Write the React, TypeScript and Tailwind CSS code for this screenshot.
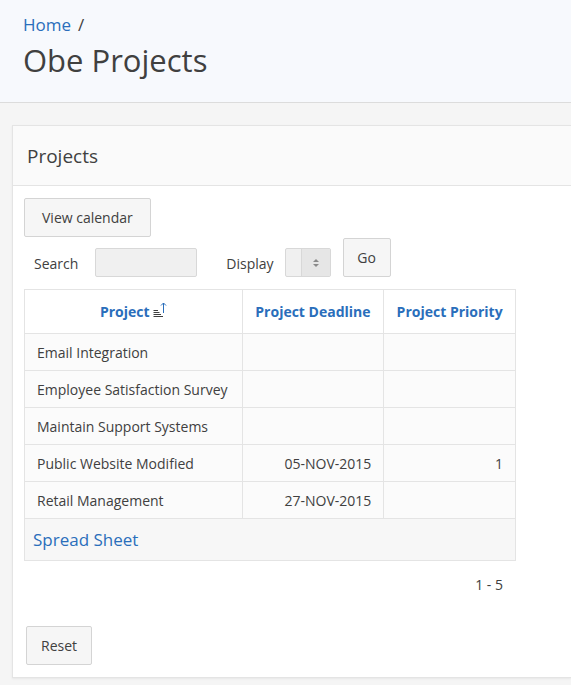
import React from 'react';

const rows = [
  { name: 'Email Integration', deadline: '', priority: '' },
  { name: 'Employee Satisfaction Survey', deadline: '', priority: '' },
  { name: 'Maintain Support Systems', deadline: '', priority: '' },
  { name: 'Public Website Modified', deadline: '05-NOV-2015', priority: '1' },
  { name: 'Retail Management', deadline: '27-NOV-2015', priority: '' },
];

function SortIcon() {
  return (
    <svg width="14" height="18" viewBox="0 0 14 18" className="inline-block ml-[3px] -mt-[6px]">
      <g stroke="#404040" strokeWidth="1">
        <line x1="0.5" y1="9.5" x2="5" y2="9.5" />
        <line x1="0.5" y1="11.5" x2="6.5" y2="11.5" />
        <line x1="0.5" y1="13.5" x2="8" y2="13.5" />
        <line x1="0.5" y1="15.5" x2="10" y2="15.5" />
      </g>
      <g stroke="#2a6ebb" strokeWidth="1" fill="none">
        <line x1="10.5" y1="2" x2="10.5" y2="12" />
        <polyline points="8,4.5 10.5,2 13,4.5" />
      </g>
    </svg>
  );
}

export default function App() {
  return (
    <div className="min-h-[685px] bg-[#f5f5f5] font-['Open_Sans','Liberation_Sans',sans-serif] text-[#404040]">
      <div className="h-[103px] bg-[#f7f9fd] border-b border-[#dcdcdc] px-[23px] pt-[12px]">
        <div className="text-[17px] leading-[26px]">
          <span className="text-[#2a6ebb]">Home</span>
          <span className="ml-[7px] text-[#404040]">/</span>
        </div>
        <h1 className="text-[31px] leading-[44px] text-[#404040]">Obe Projects</h1>
      </div>

      <div className="pt-[22px] pl-[12px]">
        <div className="bg-white border border-r-0 border-[#e4e4e4] shadow-[0_1px_2px_rgba(0,0,0,0.06)]">
          <div className="h-[60px] bg-[#fafafa] border-b border-[#e4e4e4] px-[14px] pt-[2px] flex items-center text-[19px] text-[#404040]">
            Projects
          </div>
          <div className="px-[11px] pt-[12px] pb-[12px]">
            <button className="h-[39px] px-[17px] bg-[#f6f6f6] border border-[#d4d4d4] rounded-[2px] text-[14px] text-[#404040]">
              View calendar
            </button>
            <div className="flex items-end mt-[1px] h-[39px]">
              <span className="ml-[10px] text-[14px] leading-[29px] translate-y-[1px]">Search</span>
              <div className="ml-[17px] w-[102px] h-[29px] bg-[#f0f0f0] border border-[#d8d8d8] rounded-[2px]" />
              <span className="ml-[29px] text-[14px] leading-[29px] translate-y-[1px]">Display</span>
              <div className="ml-[11px] w-[46px] h-[29px] bg-[#f0f0f0] border border-[#d8d8d8] rounded-[2px] flex">
                <div className="w-[16px] border-r border-[#d8d8d8]" />
                <div className="flex-1 bg-[#e6e6e6] flex items-center justify-center">
                  <svg width="6" height="10" viewBox="0 0 6 10">
                    <polygon points="0,4 3,1 6,4" fill="#8a8a8a" />
                    <polygon points="0,6 3,9 6,6" fill="#8a8a8a" />
                  </svg>
                </div>
              </div>
              <button className="ml-[12px] h-[39px] w-[48px] bg-[#f6f6f6] border border-[#d4d4d4] rounded-[2px] text-[14px] text-[#404040]">
                Go
              </button>
            </div>

            <table className="mt-[12px] w-[492px] border-collapse text-[14px]">
              <thead>
                <tr className="h-[44px] bg-white">
                  <th className="w-[218px] border border-[#e4e4e4] font-bold text-[#2a6ebb]">
                    Project<SortIcon />
                  </th>
                  <th className="w-[142px] border border-[#e4e4e4] font-bold text-[#2a6ebb]">Project Deadline</th>
                  <th className="w-[132px] border border-[#e4e4e4] font-bold text-[#2a6ebb]">Project Priority</th>
                </tr>
              </thead>
              <tbody>
                {rows.map((r) => (
                  <tr key={r.name} className="h-[37px] bg-[#fbfbfb]">
                    <td className="border border-[#e4e4e4] px-[12px]">{r.name}</td>
                    <td className="border border-[#e4e4e4] px-[12px] text-right">{r.deadline}</td>
                    <td className="border border-[#e4e4e4] px-[12px] text-right">{r.priority}</td>
                  </tr>
                ))}
                <tr className="h-[42px] bg-[#f7f7f7]">
                  <td colSpan={3} className="border border-[#e4e4e4] px-[8px] text-[17px] text-[#2a6ebb]">
                    Spread Sheet
                  </td>
                </tr>
              </tbody>
            </table>

            <div className="w-[492px] text-right pr-[13px] mt-[14px] text-[14px] leading-[20px]">1 - 5</div>

            <button className="mt-[31px] ml-[2px] h-[39px] px-[14px] bg-[#f6f6f6] border border-[#d4d4d4] rounded-[2px] text-[14px] text-[#404040]">
              Reset
            </button>
          </div>
        </div>
      </div>
    </div>
  );
}
